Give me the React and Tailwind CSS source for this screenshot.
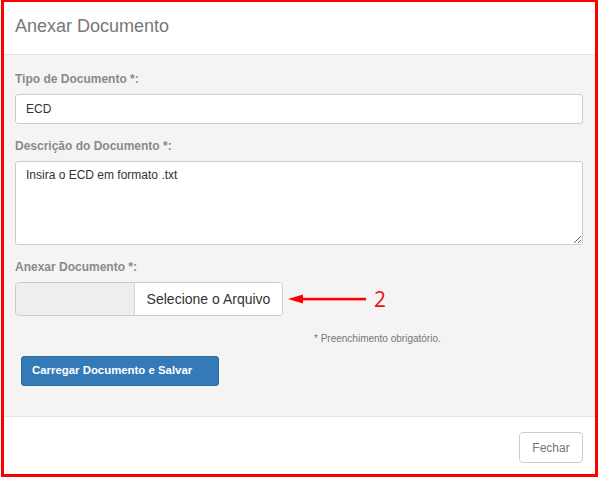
import React from "react";

function FieldLabel({ children }) {
  return (
    <div className="h-[17px] mb-[6px] text-[12px] leading-[17px] font-bold text-[#8a8a8a]">
      {children}
    </div>
  );
}

export default function App() {
  return (
    <div
      className="w-[598px] h-[477px] bg-white pl-px"
      style={{ fontFamily: '"Liberation Sans", Arial, sans-serif' }}
    >
      <div className="w-[597px] h-[477px] flex flex-col border-[#f00] border-t-2 border-l-[3px] border-r-[3px] border-b-[3px] bg-white">
        {/* header */}
        <div className="h-[53px] shrink-0 border-b border-[#e5e5e5] pl-[11px] pt-[14px]">
          <h2 className="text-[18px] leading-[20px] text-[#777]">Anexar Documento</h2>
        </div>

        {/* body */}
        <div className="flex-1 bg-[#f4f4f4] pl-[11px] pr-[12px] pt-[16px]">
          <FieldLabel>Tipo de Documento *:</FieldLabel>
          <input
            readOnly
            value="ECD"
            className="w-full h-[30px] block bg-white border border-[#ccc] rounded-[3px] px-[10px] text-[12px] text-[#333] outline-none"
          />

          <div className="mt-[14px]">
            <FieldLabel>Descrição do Documento *:</FieldLabel>
            <textarea
              readOnly
              defaultValue="Insira o ECD em formato .txt"
              className="w-full h-[84px] block bg-white border border-[#ccc] rounded-[3px] px-[10px] pt-[5px] text-[12px] leading-[17px] text-[#333] outline-none resize-y"
            />
          </div>

          <div className="mt-[14px]">
            <FieldLabel>Anexar Documento *:</FieldLabel>
            <div className="flex items-center">
              <div className="flex h-[34px] w-[268px] border border-[#ccc] rounded-[4px] overflow-hidden">
                <div className="w-[119px] bg-[#eee] border-r border-[#d6d6d6]" />
                <div className="flex-1 bg-white flex items-center justify-center text-[14px] text-[#333]">
                  Selecione o Arquivo
                </div>
              </div>
              <div className="ml-[5px] flex items-center">
                <svg width="80" height="12" viewBox="0 0 80 12">
                  <polygon points="0,6 15,1.5 15,10.5" fill="#f00" />
                  <rect x="12" y="4.8" width="66" height="2.6" fill="#f00" />
                </svg>
                <span
                  className="ml-[6px] text-[21px] leading-none text-[#f01010]"
                  style={{ fontFamily: '"Open Sans", "DejaVu Sans", sans-serif' }}
                >
                  2
                </span>
              </div>
            </div>
          </div>

          <div className="mt-[16px] ml-[299px] text-[10px] leading-[14px] text-[#777]">
            * Preenchimento obrigatório.
          </div>

          <button className="mt-[10px] ml-[6px] w-[198px] h-[30px] bg-[#337ab7] border border-[#2e6da4] rounded-[3px] text-white text-[11.4px] font-bold text-left pl-[10px]">
            Carregar Documento e Salvar
          </button>
        </div>

        {/* footer */}
        <div className="h-[58px] shrink-0 border-t border-[#e5e5e5] bg-white flex justify-end items-start pt-[15px] pr-[12px]">
          <button className="w-[64px] h-[31px] bg-white border border-[#ccc] rounded-[4px] text-[12px] text-[#777]">
            Fechar
          </button>
        </div>
      </div>
    </div>
  );
}
